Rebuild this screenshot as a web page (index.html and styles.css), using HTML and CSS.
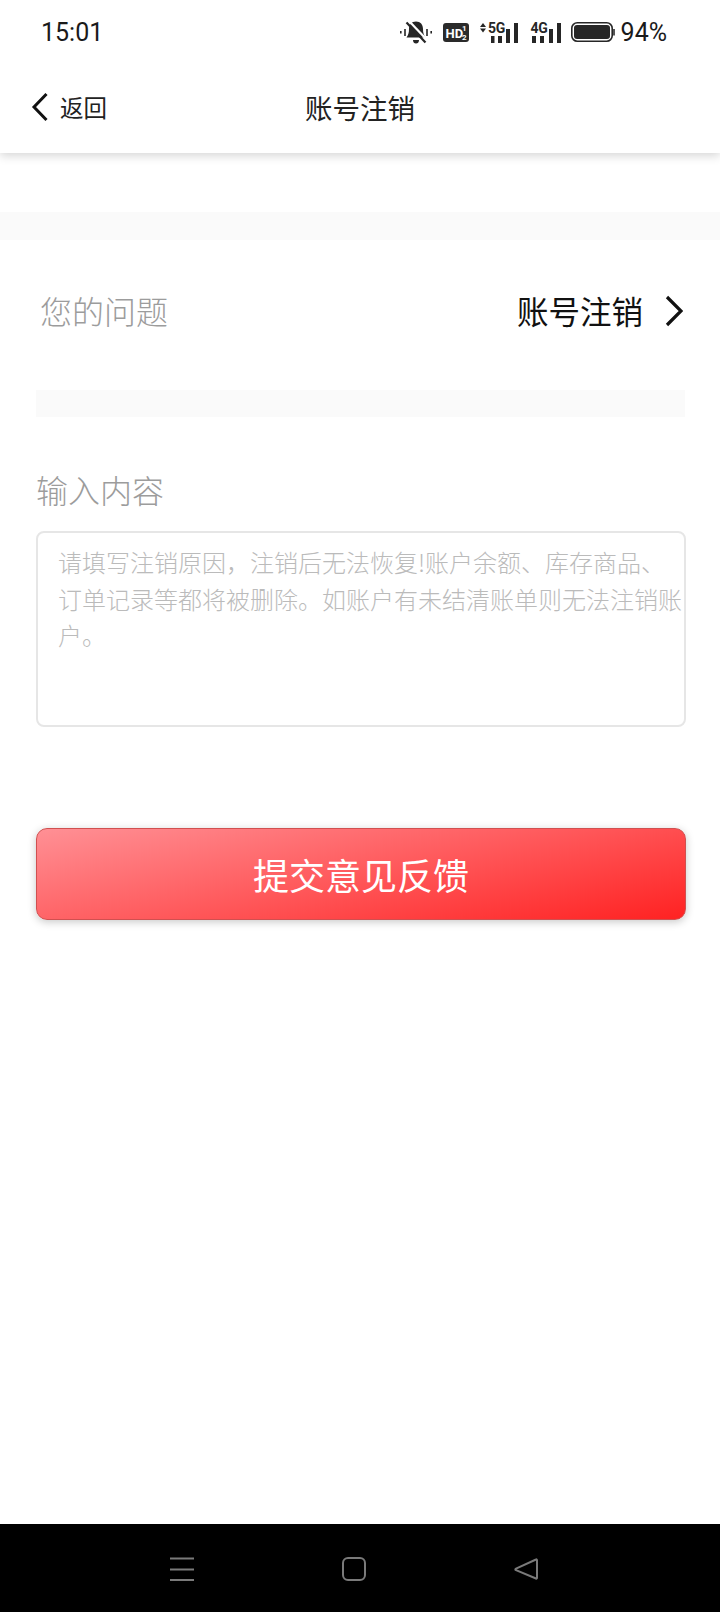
FILE: index.html
```html
<!DOCTYPE html>
<html lang="zh-CN">
<head>
<meta charset="utf-8">
<title>账号注销</title>
<link rel="stylesheet" href="styles.css">
</head>
<body>
<div class="page">
  <header class="header">
    <div class="status">
      <span class="time">15:01</span>
      <div class="status-icons">
        <svg class="ic-bell" width="32" height="23" viewBox="0 0 32 23"><path d="M16 0.500c-4.500 0-7 3-7 7.500 0 4-.8 6-2.500 8.500h19c-1.700-2.500-2.500-4.500-2.500-8.500 0-4.500-2.500-7.500-7-7.500z" fill="#262626"/><path d="M13 19h6c0 2.500-1.300 3.500-3 3.500s-3-1-3-3.500z" fill="#262626"/><path d="M9 0l19 20" stroke="#fff" stroke-width="2.200"/><path d="M6.500 1.500l19 20" stroke="#262626" stroke-width="2.200"/><path d="M0.800 10v2.500M5 8v7M27 8v7M31.200 10v2.500" stroke="#262626" stroke-width="1.600"/></svg>
        <svg class="ic-hd" width="26" height="19" viewBox="0 0 26 19"><rect width="26" height="19" rx="3" fill="#2a2a2a"/><text x="2.500" y="14.500" class="hd-text">HD</text><text x="19" y="8" class="hd-frac">1</text><text x="19" y="16.500" class="hd-frac">2</text></svg>
        <svg class="ic-sig5" width="40" height="22" viewBox="0 -2 40 22"><path d="M1 4l3-4 3 4zM1 5.500h6l-3 4z" fill="#262626"/><text x="9" y="10" class="net">5G</text><path d="M12 13h3.500v7H12zM19 13h4v7h-4zM27 6h4v14h-4zM35 0h4v20h-4z" fill="#262626"/></svg>
        <svg class="ic-sig4" width="31" height="22" viewBox="0 -2 31 22"><text x="0.500" y="10" class="net">4G</text><path d="M2 13h4v7H2zM10 13h4v7h-4zM19 6h4v14h-4zM27 0h4v20h-4z" fill="#262626"/></svg>
        <svg class="ic-batt" width="44" height="20" viewBox="0 0 44 20"><rect x="0.800" y="0.800" width="40.400" height="18.400" rx="5.500" fill="none" stroke="#262626" stroke-width="1.600"/><rect x="3" y="3" width="36" height="14" rx="3" fill="#262626"/><path d="M43 7v6.500" stroke="#555" stroke-width="2"/></svg>
        <span class="pct">94%</span>
      </div>
    </div>
    <div class="nav">
      <div class="back">
        <svg class="back-icon" width="18" height="30" viewBox="0 0 18 30"><path d="M15.500 2L3 15l12.500 13" fill="none" stroke="#111" stroke-width="3"/></svg>
        <span class="back-text">返回</span>
      </div>
      <h1 class="title">账号注销</h1>
    </div>
  </header>
  <main class="main">
    <div class="band"></div>
    <div class="row">
      <span class="row-label">您的问题</span>
      <div class="row-value">
        <span>账号注销</span>
        <svg class="row-chevron" width="18" height="32" viewBox="0 0 18 32"><path d="M2 2l14 14L2 30" fill="none" stroke="#111" stroke-width="3.200"/></svg>
      </div>
    </div>
    <div class="band band-inset"></div>
    <div class="input-label">输入内容</div>
    <div class="input-box">请填写注销原因，注销后无法恢复!账户余额、库存商品、订单记录等都将被删除。如账户有未结清账单则无法注销账户。</div>
    <button class="submit">提交意见反馈</button>
  </main>
  <footer class="sysnav">
    <svg width="24" height="24" viewBox="0 0 24 24"><path d="M0 1.500h24M0 12.500h24M0 23h24" stroke="#7a7a7a" stroke-width="2"/></svg>
    <svg width="24" height="24" viewBox="0 0 24 24"><rect x="1" y="1" width="22" height="22" rx="5" fill="none" stroke="#7a7a7a" stroke-width="2"/></svg>
    <svg width="24" height="24" viewBox="0 0 24 24"><path d="M22 2.500c.6-.3 1 0 1 .7v17.600c0 .7-.4 1-1 .7L2 13.200c-.9-.5-.9-1 0-1.500z" fill="none" stroke="#7a7a7a" stroke-width="2" stroke-linejoin="round"/></svg>
  </footer>
</div>
</body>
</html>
```

FILE: styles.css
```css
* { box-sizing: border-box; }
html, body { margin: 0; padding: 0; background: #fff; }
.page {
  width: 720px;
  height: 1612px;
  display: flex;
  flex-direction: column;
  font-family: "Noto Sans CJK SC", "Noto Sans", sans-serif;
  color: #111;
  overflow: hidden;
}
.header {
  height: 153px;
  background: #fff;
  box-shadow: 0 3px 9px rgba(0, 0, 0, 0.16);
  position: relative;
  flex: none;
}
.status {
  height: 64px;
  display: flex;
  align-items: center;
  justify-content: space-between;
  padding: 0 53px 0 41px;
}
.time { font: 25px/1 Roboto, sans-serif; color: #1a1a1a; }
.status-icons { display: flex; align-items: center; }
.status-icons svg { overflow: visible; }
.ic-hd { margin-left: 11px; }
.ic-sig5 { margin-left: 10px; }
.ic-sig4 { margin-left: 11px; }
.ic-batt { margin-left: 10px; }
.pct { font: 25px/1 Roboto, sans-serif; color: #1a1a1a; margin-left: 6px; }
.hd-text { font: 700 13px Roboto, sans-serif; fill: #fff; }
.hd-frac { font: 700 8px Roboto, sans-serif; fill: #fff; }
.net { font: 700 14px "Liberation Sans Narrow", Roboto, sans-serif; fill: #262626; letter-spacing: -0.3px; }
.nav {
  height: 89px;
  position: relative;
  display: flex;
  align-items: center;
  justify-content: center;
  padding-bottom: 4px;
}
.back {
  position: absolute;
  left: 31px;
  top: 28px;
  display: flex;
  align-items: center;
  gap: 11px;
}
.back-text { font-size: 23.500px; line-height: 30px; color: #222; }
.title { margin: 0; font-size: 27.500px; font-weight: 400; line-height: 36px; color: #222; }
.main {
  flex: 1;
  padding-top: 59px;
  display: flex;
  flex-direction: column;
}
.band { height: 28px; background: #fafafa; flex: none; }
.band-inset { margin: 0 35px 0 36px; height: 27px; }
.row {
  height: 150px;
  display: flex;
  align-items: center;
  justify-content: space-between;
  padding: 0 37px 10px 40px;
}
.row-label { font-size: 32px; color: #9c9c9c; font-weight: 300; }
.row-value { display: flex; align-items: center; gap: 22px; font-size: 31.500px; color: #111; }
.row-chevron { margin-top: 2px; }
.input-label {
  margin: 52px 0 0 36px;
  font-size: 32px;
  line-height: 40px;
  color: #9c9c9c;
  font-weight: 300;
}
.input-box {
  margin: 22px 34px 0 36px;
  height: 196px;
  border: 2px solid #e6e6e6;
  border-radius: 8px;
  padding: 11px 0 0 20px;
  font-size: 24px;
  font-weight: 300;
  line-height: 36.700px;
  color: #bbbbbb;
}
.submit {
  margin: 101px 34px 0 36px;
  height: 92px;
  border: 1px solid #d05050;
  border-radius: 11px;
  background: linear-gradient(168deg, #ff9095 0%, #ff2222 100%);
  box-shadow: 0 2px 9px rgba(0, 0, 0, 0.22);
  color: #fff;
  font-family: inherit;
  font-size: 36px;
  padding: 0;
}
.sysnav {
  height: 88px;
  flex: none;
  background: #000;
  display: grid;
  grid-template-columns: 24px 24px 24px;
  column-gap: 148px;
  justify-content: start;
  align-items: start;
  padding: 33px 0 0 170px;
}
```
